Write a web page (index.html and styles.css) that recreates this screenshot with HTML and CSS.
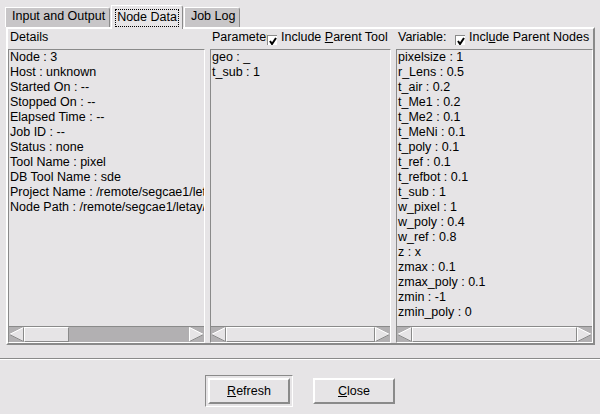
FILE: index.html
```html
<!DOCTYPE html>
<html>
<head>
<meta charset="utf-8">
<link rel="stylesheet" href="styles.css">
</head>
<body>
<div class="window">
  <div class="notebook">
    <div class="tabs">
      <div class="tab">Input and Output</div>
      <div class="tab active"><span class="focus">Node Data</span></div>
      <div class="tab">Job Log</div>
    </div>
    <div class="pane">
      <div class="col col-wide">
        <div class="head"><span class="label">Details</span></div>
        <div class="box">
          <div class="list">
            <div>Node : 3</div>
            <div>Host : unknown</div>
            <div>Started On : --</div>
            <div>Stopped On : --</div>
            <div>Elapsed Time : --</div>
            <div>Job ID : --</div>
            <div>Status : none</div>
            <div>Tool Name : pixel</div>
            <div>DB Tool Name : sde</div>
            <div>Project Name : /remote/segcae1/letay/pixel</div>
            <div>Node Path : /remote/segcae1/letay/pixel/n3</div>
          </div>
          <div class="hscroll">
            <svg class="arrow" width="15" height="15" viewBox="0 0 15 15"><polygon points="0,7.5 15,0 15,15" fill="#e6e4e6"/><line x1="0.5" y1="7.5" x2="14.5" y2="0.5" stroke="#fff"/><line x1="0.5" y1="7.5" x2="14.5" y2="14.5" stroke="#8a8a8a"/><line x1="14.5" y1="0.5" x2="14.5" y2="14.5" stroke="#8a8a8a"/></svg>
            <div class="trough"><div class="thumb thumb-small"></div></div>
            <svg class="arrow" width="15" height="15" viewBox="0 0 15 15"><polygon points="0,0 15,7.5 0,15" fill="#e6e4e6"/><line x1="0.5" y1="0.5" x2="14.5" y2="7.5" stroke="#fff"/><line x1="0.5" y1="0.5" x2="0.5" y2="14.5" stroke="#fff"/><line x1="0.5" y1="14.5" x2="14.5" y2="7.5" stroke="#8a8a8a"/></svg>
          </div>
        </div>
      </div>
      <div class="col col-mid">
        <div class="head">
          <span class="label clip">Parameters:</span>
          <span class="check"><svg width="8" height="8" viewBox="0 0 8 8"><polyline points="1,4 3,7 7,1" fill="none" stroke="#000" stroke-width="2"/></svg></span>
          <span class="label">Include <u>P</u>arent Tool</span>
        </div>
        <div class="box">
          <div class="list">
            <div>geo : _</div>
            <div>t_sub : 1</div>
          </div>
          <div class="hscroll">
            <svg class="arrow" width="15" height="15" viewBox="0 0 15 15"><polygon points="0,7.5 15,0 15,15" fill="#e6e4e6"/><line x1="0.5" y1="7.5" x2="14.5" y2="0.5" stroke="#fff"/><line x1="0.5" y1="7.5" x2="14.5" y2="14.5" stroke="#8a8a8a"/><line x1="14.5" y1="0.5" x2="14.5" y2="14.5" stroke="#8a8a8a"/></svg>
            <div class="trough"><div class="thumb thumb-full"></div></div>
            <svg class="arrow" width="15" height="15" viewBox="0 0 15 15"><polygon points="0,0 15,7.5 0,15" fill="#e6e4e6"/><line x1="0.5" y1="0.5" x2="14.5" y2="7.5" stroke="#fff"/><line x1="0.5" y1="0.5" x2="0.5" y2="14.5" stroke="#fff"/><line x1="0.5" y1="14.5" x2="14.5" y2="7.5" stroke="#8a8a8a"/></svg>
          </div>
        </div>
      </div>
      <div class="col col-wide">
        <div class="head">
          <span class="label var-label">Variable:</span>
          <span class="check"><svg width="8" height="8" viewBox="0 0 8 8"><polyline points="1,4 3,7 7,1" fill="none" stroke="#000" stroke-width="2"/></svg></span>
          <span class="label">Incl<u>u</u>de Parent Nodes</span>
        </div>
        <div class="box">
          <div class="list">
            <div>pixelsize : 1</div>
            <div>r_Lens : 0.5</div>
            <div>t_air : 0.2</div>
            <div>t_Me1 : 0.2</div>
            <div>t_Me2 : 0.1</div>
            <div>t_MeNi : 0.1</div>
            <div>t_poly : 0.1</div>
            <div>t_ref : 0.1</div>
            <div>t_refbot : 0.1</div>
            <div>t_sub : 1</div>
            <div>w_pixel : 1</div>
            <div>w_poly : 0.4</div>
            <div>w_ref : 0.8</div>
            <div>z : x</div>
            <div>zmax : 0.1</div>
            <div>zmax_poly : 0.1</div>
            <div>zmin : -1</div>
            <div>zmin_poly : 0</div>
          </div>
          <div class="hscroll">
            <svg class="arrow" width="15" height="15" viewBox="0 0 15 15"><polygon points="0,7.5 15,0 15,15" fill="#e6e4e6"/><line x1="0.5" y1="7.5" x2="14.5" y2="0.5" stroke="#fff"/><line x1="0.5" y1="7.5" x2="14.5" y2="14.5" stroke="#8a8a8a"/><line x1="14.5" y1="0.5" x2="14.5" y2="14.5" stroke="#8a8a8a"/></svg>
            <div class="trough"><div class="thumb thumb-full"></div></div>
            <svg class="arrow" width="15" height="15" viewBox="0 0 15 15"><polygon points="0,0 15,7.5 0,15" fill="#e6e4e6"/><line x1="0.5" y1="0.5" x2="14.5" y2="7.5" stroke="#fff"/><line x1="0.5" y1="0.5" x2="0.5" y2="14.5" stroke="#fff"/><line x1="0.5" y1="14.5" x2="14.5" y2="7.5" stroke="#8a8a8a"/></svg>
          </div>
        </div>
      </div>
    </div>
  </div>
  <div class="sep"></div>
  <div class="buttons">
    <div class="ring"><button class="btn"><u>R</u>efresh</button></div>
    <button class="btn"><u>C</u>lose</button>
  </div>
</div>
</body>
</html>
```

FILE: styles.css
```css
* { box-sizing: border-box; }
html, body { margin: 0; padding: 0; }
body {
  width: 600px;
  height: 414px;
  overflow: hidden;
  background: #e6e4e6;
  font-family: "Liberation Sans", Arial, sans-serif;
  font-size: 12.5px;
  color: #000;
}
.window { display: flex; flex-direction: column; height: 414px; }
.notebook { padding-top: 5px; }
.tabs {
  display: flex;
  align-items: flex-end;
  gap: 1px;
  height: 22px;
  margin-left: 5px;
  position: relative;
  z-index: 1;
}
.tab {
  height: 20px;
  padding: 1px 4px 0 6px;
  line-height: 15px;
  background: #c8c6c8;
  border-top: 1px solid #fff;
  border-left: 1px solid #fff;
  border-right: 1px solid #8a8a8a;
  border-top-right-radius: 3px;
  white-space: nowrap;
}
.tab.active {
  height: 24px;
  margin-bottom: -2px;
  padding: 3px 3px 0 3px;
  background: #e6e4e6;
}
.focus {
  display: inline-block;
  border: 1px dotted #000;
  padding: 0 1px 2px 1px;
  line-height: 14px;
}
.pane {
  margin-left: 6px;
  width: 589px;
  height: 318px;
  border: 2px solid;
  border-color: #fff #8a8a8a #8a8a8a #fff;
  display: flex;
  gap: 5px;
}
.col { display: flex; flex-direction: column; }
.col-wide { width: 197px; }
.col-mid { width: 181px; }
.head {
  height: 20px;
  flex: none;
  display: flex;
  align-items: flex-start;
  padding-left: 2px;
  white-space: nowrap;
  overflow: hidden;
}
.head .label { margin-top: 1px; line-height: 15px; }
.head .clip { width: 55px; overflow: hidden; flex: none; }
.head .var-label { width: 57px; flex: none; }
.check {
  flex: none;
  width: 10px;
  height: 10px;
  margin: 6px 4px 0 0;
  background: #fff;
  border-top: 1px solid #8a8a8a;
  border-left: 1px solid #8a8a8a;
  display: flex;
  align-items: center;
  justify-content: center;
}
.box {
  flex: 1;
  min-height: 0;
  border: 1px solid;
  border-color: #8a8a8a #fff #fff #8a8a8a;
  display: flex;
  flex-direction: column;
}
.list {
  flex: 1;
  min-height: 0;
  overflow: hidden;
  padding-left: 1px;
  line-height: 15px;
  white-space: nowrap;
}
.hscroll {
  flex: none;
  height: 16px;
  border-top: 1px solid #8a8a8a;
  background: #b2b0b2;
  display: flex;
}
.arrow { flex: none; display: block; }
.trough { flex: 1; display: flex; }
.thumb {
  height: 15px;
  background: #e6e4e6;
  border: 1px solid;
  border-color: #fff #8a8a8a #8a8a8a #fff;
}
.thumb-small { width: 45px; }
.thumb-full { flex: 1; }
.sep {
  margin-top: 13px;
  height: 2px;
  border-top: 1px solid #8a8a8a;
  border-bottom: 1px solid #fff;
}
.buttons {
  display: flex;
  justify-content: center;
  align-items: center;
  gap: 20px;
  padding-top: 15px;
}
.ring {
  padding: 2px;
  border: 1px solid;
  border-color: #8a8a8a #fff #fff #8a8a8a;
}
.btn {
  display: block;
  width: 82px;
  height: 26px;
  padding: 0;
  margin: 0;
  border: 2px solid;
  border-color: #fff #8a8a8a #8a8a8a #fff;
  background: #e6e4e6;
  font: inherit;
  color: #000;
  text-align: center;
}
```
